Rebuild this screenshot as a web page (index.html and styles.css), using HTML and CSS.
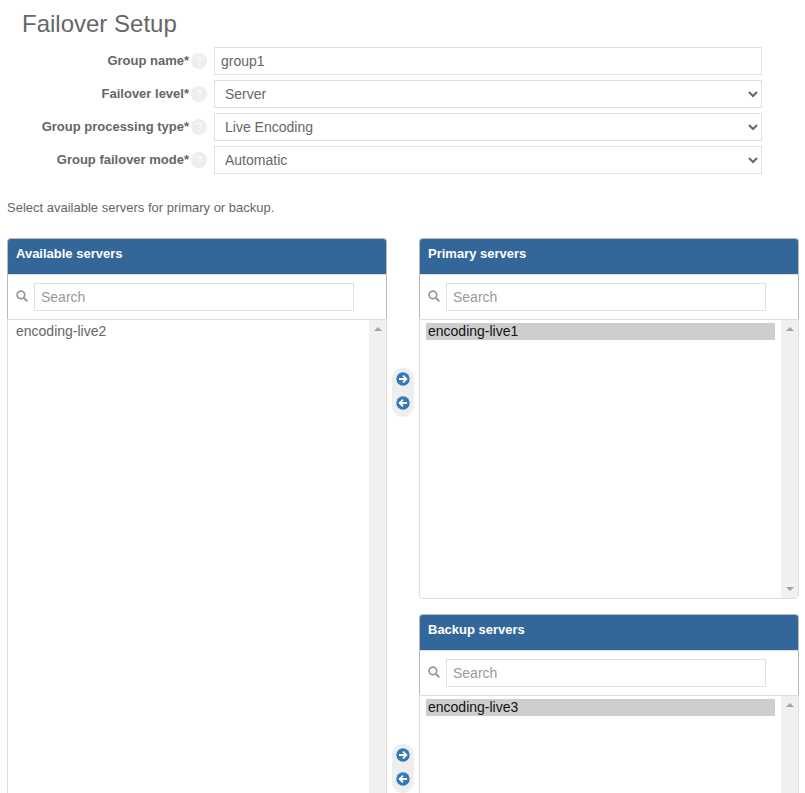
FILE: index.html
```html
<!DOCTYPE html>
<html lang="en">
<head>
<meta charset="utf-8">
<meta name="viewport" content="width=device-width, initial-scale=1">
<title>Failover Setup</title>
<link rel="stylesheet" href="styles.css">
</head>
<body>
<svg class="sprite" aria-hidden="true">
  <symbol id="search" viewBox="0 0 12 12">
    <circle cx="4.900" cy="4.900" r="3.800" fill="none" stroke="currentColor" stroke-width="1.700"/>
    <path d="M7.800 7.800 10.700 10.700" stroke="currentColor" stroke-width="2" stroke-linecap="round"/>
  </symbol>
  <symbol id="help" viewBox="0 0 16 16">
    <circle cx="8" cy="8" r="8" fill="#eee"/>
    <path d="M5.9 6.5C5.9 4.9 7 4.5 8 4.5s2.1.6 2.1 1.8C10.100 7.700 8 7.600 8 9.300M8 10.800v1.300" fill="none" stroke="#fafafa" stroke-width="1.300"/>
  </symbol>
  <symbol id="arrow" viewBox="0 0 14 14">
    <circle cx="7" cy="7" r="6.700" fill="#337ab7"/>
    <path d="M3 7h7M7 3.600 10.400 7 7 10.400" fill="none" stroke="#fff" stroke-width="1.800"/>
  </symbol>
</svg>
<main class="page">
  <h1 class="title">Failover Setup</h1>
  <form class="form">
    <div class="row">
      <label class="label" for="name">Group name*</label>
      <svg class="help"><use href="#help"/></svg>
      <input class="field" id="name" type="text" value="group1">
    </div>
    <div class="row">
      <label class="label" for="level">Failover level*</label>
      <svg class="help"><use href="#help"/></svg>
      <select class="field" id="level"><option>Server</option></select>
    </div>
    <div class="row">
      <label class="label" for="type">Group processing type*</label>
      <svg class="help"><use href="#help"/></svg>
      <select class="field" id="type"><option>Live Encoding</option></select>
    </div>
    <div class="row">
      <label class="label" for="mode">Group failover mode*</label>
      <svg class="help"><use href="#help"/></svg>
      <select class="field" id="mode"><option>Automatic</option></select>
    </div>
  </form>
  <p class="hint">Select available servers for primary or backup.</p>
  <div class="servers">
    <section class="panel">
      <h2 class="panel-title">Available servers</h2>
      <div class="filter">
        <svg class="search-icon"><use href="#search"/></svg>
        <input class="field" type="text" placeholder="Search" aria-label="Search available servers">
      </div>
      <div class="list">
        <select class="options" multiple aria-label="Available servers"><option>encoding-live2</option></select>
        <div class="track"><span class="up"></span><span class="down"></span></div>
      </div>
    </section>
    <div class="targets">
      <div class="target">
        <div class="mover">
          <button class="move" type="button" aria-label="Add to primary"><svg><use href="#arrow"/></svg></button>
          <button class="move back" type="button" aria-label="Remove from primary"><svg><use href="#arrow"/></svg></button>
        </div>
        <section class="panel">
          <h2 class="panel-title">Primary servers</h2>
          <div class="filter">
            <svg class="search-icon"><use href="#search"/></svg>
            <input class="field" type="text" placeholder="Search" aria-label="Search primary servers">
          </div>
          <div class="list">
            <select class="options" multiple aria-label="Primary servers"><option selected>encoding-live1</option></select>
            <div class="track"><span class="up"></span><span class="down"></span></div>
          </div>
        </section>
      </div>
      <div class="target">
        <div class="mover">
          <button class="move" type="button" aria-label="Add to backup"><svg><use href="#arrow"/></svg></button>
          <button class="move back" type="button" aria-label="Remove from backup"><svg><use href="#arrow"/></svg></button>
        </div>
        <section class="panel">
          <h2 class="panel-title">Backup servers</h2>
          <div class="filter">
            <svg class="search-icon"><use href="#search"/></svg>
            <input class="field" type="text" placeholder="Search" aria-label="Search backup servers">
          </div>
          <div class="list">
            <select class="options" multiple aria-label="Backup servers"><option selected>encoding-live3</option></select>
            <div class="track"><span class="up"></span><span class="down"></span></div>
          </div>
        </section>
      </div>
    </div>
  </div>
</main>
</body>
</html>
```
FILE: styles.css
```css
* {
  box-sizing: border-box;
}

body {
  margin: 0;
  height: 100vh;
  overflow: hidden;
  background: #fff;
  color: #666;
  font: 13px/18px "Liberation Sans", Arial, sans-serif;
}

.sprite {
  display: none;
}

svg {
  display: block;
  flex: none;
}

.page {
  height: 100%;
  overflow: hidden;
  padding: 8px 6px 0 7px;
}

.title {
  margin: 0 0 7px 15px;
  font-size: 24px;
  line-height: 32px;
  font-weight: normal;
}

.form {
  display: grid;
  gap: 5px;
  padding-right: 37px;
}

.row {
  display: grid;
  grid-template-columns: 182px 16px 1fr;
  align-items: center;
}

.label {
  text-align: right;
  font-weight: bold;
}

.help {
  width: 16px;
  height: 16px;
  margin-left: 2px;
}

.field {
  width: 100%;
  height: 28px;
  padding: 0 6px;
  border: 1px solid #e0e0e0;
  border-radius: 0;
  background: #fff;
  color: #666;
  font: 14px/20px "Liberation Sans", Arial, sans-serif;
}

.row .field {
  margin-left: 9px;
  width: calc(100% - 9px);
}

.field::placeholder {
  color: #999;
}

.hint {
  margin: 25px 0 21px;
}

.servers {
  display: grid;
  grid-template-columns: minmax(0, 380fr) minmax(0, 412fr);
}

.targets {
  display: grid;
  gap: 15px;
}

.target {
  display: grid;
  grid-template-columns: 32px minmax(0, 1fr);
}

.panel {
  display: flex;
  flex-direction: column;
  min-width: 0;
}

.panel-title {
  height: 36px;
  margin: 0;
  padding: 6px 8px;
  border: 1px solid #bbb;
  border-bottom: 0;
  border-radius: 4px 4px 0 0;
  background: #336799;
  color: #fff;
  font-size: 13px;
  line-height: 18px;
}

.filter {
  display: flex;
  gap: 6px;
  height: 45px;
  padding: 8px 32px 0 8px;
  border: 1px solid #bbb;
  border-top-color: #ddd;
  border-bottom: 0;
}

.filter .field {
  flex: 1;
  min-width: 0;
}

.search-icon {
  width: 12px;
  height: 12px;
  margin-top: 7px;
  color: #999;
}

.list {
  display: flex;
  flex: 1;
  min-height: 280px;
  border: 1px solid #ddd;
  border-radius: 0 0 4px 4px;
  overflow: hidden;
}

.options {
  flex: 1;
  min-width: 0;
  padding: 3px 6px;
  border: 0;
  outline: 0;
  background: #fff;
  color: #666;
  font: 14px/17px "Liberation Sans", Arial, sans-serif;
  scrollbar-width: none;
}

.options option {
  min-height: 17px;
  padding: 0 2px;
}

.options option:checked {
  background: #cecece;
  color: #111;
}

.track {
  display: flex;
  flex-direction: column;
  justify-content: space-between;
  align-items: center;
  width: 17px;
  padding: 7px 0;
  background: #f0f0f0;
}

.up,
.down {
  border: 4px solid transparent;
}

.up {
  border-top: 0;
  border-bottom-color: #a3a3a3;
}

.down {
  border-bottom: 0;
  border-top-color: #a3a3a3;
}

.mover {
  display: flex;
  flex-direction: column;
  gap: 10px;
  align-items: center;
  justify-self: center;
  width: 22px;
  height: 49px;
  margin-top: 130px;
  padding-top: 4px;
  border-radius: 11px;
  background: #eee;
}

.move {
  padding: 0;
  border: 0;
  background: none;
  cursor: pointer;
}

.move svg {
  width: 14px;
  height: 14px;
}

.back {
  transform: rotate(180deg);
}
```
